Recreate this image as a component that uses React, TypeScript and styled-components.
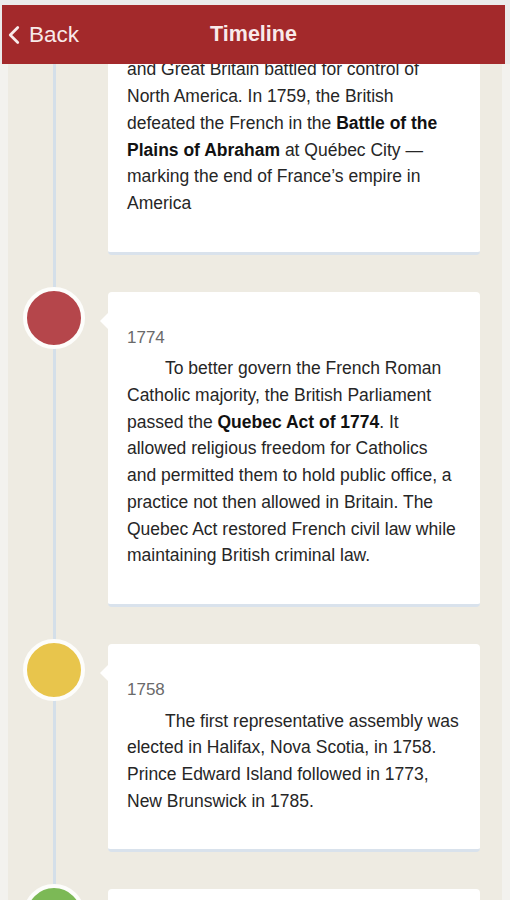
import React from "react";
import styled, { createGlobalStyle } from "styled-components";
import { ChevronLeft } from "lucide-react";

const Global = createGlobalStyle`
  html, body { margin: 0; padding: 0; }
  body {
    background: #f3f2ee;
    font-family: "Liberation Sans", Arial, Helvetica, sans-serif;
    overflow: hidden;
  }
`;

const Screen = styled.div`
  width: 510px;
  height: 900px;
  overflow: hidden;
  background: #f3f2ee;
  padding: 0 8px 0 8px;
  box-sizing: border-box;
`;

const Header = styled.header`
  position: fixed;
  top: 0;
  left: 0;
  width: 510px;
  height: 64px;
  box-sizing: border-box;
  border-top: 5px solid #ebebeb;
  border-left: 2px solid #ebebeb;
  border-right: 5px solid #ebebeb;
  background: #a3292b;
  display: grid;
  grid-template-columns: 1fr auto 1fr;
  align-items: center;
  z-index: 5;
`;

const BackButton = styled.button`
  justify-self: start;
  display: flex;
  align-items: center;
  gap: 0;
  background: none;
  border: none;
  padding: 0;
  margin-left: -3px;
  color: #f8eaea;
  font-family: inherit;
  font-size: 22.5px;
  cursor: pointer;

  svg {
    flex: none;
  }
`;

const Title = styled.h1`
  margin: 0;
  color: #f8eaea;
  font-size: 21.5px;
  font-weight: 700;
  padding-bottom: 1px;
`;

const Content = styled.main`
  background: #eeebe2;
  min-height: 100%;
`;

const List = styled.ol`
  list-style: none;
  margin: -34px 0 0 0;
  padding: 0;
  display: flex;
  flex-direction: column;
  background: linear-gradient(
    to right,
    transparent 45px,
    #d4dfe9 45px,
    #d4dfe9 48px,
    transparent 48px
  );
`;

const Row = styled.li`
  display: grid;
  grid-template-columns: 100px 372px;
  padding-bottom: 37px;
`;

const Rail = styled.div`
  display: flex;
  justify-content: flex-start;
`;

const Dot = styled.div<{ $color: string }>`
  width: 54px;
  height: 54px;
  margin: -5px 0 0 15px;
  border-radius: 50%;
  border: 4px solid #fdfdfb;
  background: ${(p) => p.$color};
  flex: none;
`;

const Card = styled.article`
  position: relative;
  background: #ffffff;
  border-radius: 4px;
  border-bottom: 3px solid #d9e2ec;
  padding: 33px 19px 35px 19px;
  color: #1e1e1e;

  &::before {
    content: "";
    position: absolute;
    left: -8px;
    top: 21px;
    border-top: 8px solid transparent;
    border-bottom: 8px solid transparent;
    border-right: 8px solid #ffffff;
  }
`;

const Year = styled.div`
  font-size: 17px;
  line-height: 26.7px;
  color: #6a6a6a;
  margin-bottom: 4px;
`;

const Body = styled.p`
  margin: 0;
  font-size: 17.5px;
  line-height: 26.7px;
  text-indent: 38px;
  color: #262626;

  b {
    font-weight: 700;
    color: #111;
  }
`;

type Item = { year: string; color: string; body: React.ReactNode };

const items: Item[] = [
  {
    year: "1759",
    color: "#b8474c",
    body: (
      <>
        From 1754 to 1763, France
        <br />
        and Great Britain battled for control of North America. In 1759, the
        British defeated the French in the <b>Battle of the Plains of Abraham</b>{" "}
        at Québec City — marking the end of France’s empire in America
      </>
    ),
  },
  {
    year: "1774",
    color: "#b5464b",
    body: (
      <>
        To better govern the French Roman Catholic majority, the British
        Parliament passed the <b>Quebec Act of 1774</b>. It allowed religious
        freedom for Catholics and permitted them to hold public office, a
        practice not then allowed in Britain. The Quebec Act restored French
        civil law while maintaining British criminal law.
      </>
    ),
  },
  {
    year: "1758",
    color: "#e8c54c",
    body: (
      <>
        The first representative assembly was elected in Halifax, Nova Scotia,
        in 1758. Prince Edward Island followed in 1773, New Brunswick in 1785.
      </>
    ),
  },
  {
    year: "1791",
    color: "#7cb956",
    body: (
      <>
        The Constitutional Act of 1791 divided the Province of Quebec into Upper
        Canada and Lower Canada.
      </>
    ),
  },
];

export default function App() {
  return (
    <>
      <Global />
      <Screen>
        <Header>
          <BackButton>
            <ChevronLeft size={30} strokeWidth={2.2} />
            Back
          </BackButton>
          <Title>Timeline</Title>
          <span />
        </Header>
        <Content>
          <List>
            {items.map((it) => (
              <Row key={it.year}>
                <Rail>
                  <Dot $color={it.color} />
                </Rail>
                <Card>
                  <Year>{it.year}</Year>
                  <Body>{it.body}</Body>
                </Card>
              </Row>
            ))}
          </List>
        </Content>
      </Screen>
    </>
  );
}
